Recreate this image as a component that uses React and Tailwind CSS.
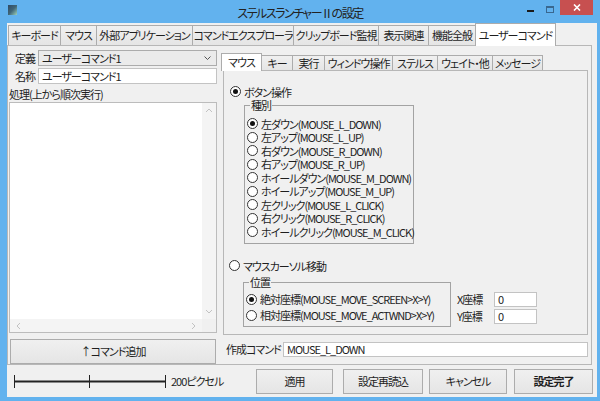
import React from "react";

const outerTabs = [
  { label: "キーボード", w: "w-[52px]" },
  { label: "マウス", w: "w-[36px]" },
  { label: "外部アプリケーション", w: "w-[96px]" },
  { label: "コマンドエクスプローラ", w: "w-[101px]" },
  { label: "クリップボード監視", w: "w-[85px]" },
  { label: "表示関連", w: "w-[50px]" },
  { label: "機能全般", w: "w-[47px]" },
];

const innerTabs = [
  { label: "キー", w: "w-[31px]" },
  { label: "実行", w: "w-[32px]" },
  { label: "ウィンドウ操作", w: "w-[68px]" },
  { label: "ステルス", w: "w-[45px]" },
  { label: "ウェイト・他", w: "w-[55px]" },
  { label: "メッセージ", w: "w-[50px]" },
];

const buttonKinds = [
  "左ダウン(MOUSE_L_DOWN)",
  "左アップ(MOUSE_L_UP)",
  "右ダウン(MOUSE_R_DOWN)",
  "右アップ(MOUSE_R_UP)",
  "ホイールダウン(MOUSE_M_DOWN)",
  "ホイールアップ(MOUSE_M_UP)",
  "左クリック(MOUSE_L_CLICK)",
  "右クリック(MOUSE_R_CLICK)",
  "ホイールクリック(MOUSE_M_CLICK)",
];

function Radio({ checked, label, className = "" }) {
  return (
    <div className={`flex items-center ${className}`}>
      <span className="w-[11px] h-[11px] rounded-full border border-[#333] bg-white flex items-center justify-center shrink-0">
        {checked && <span className="w-[5px] h-[5px] rounded-full bg-[#111]" />}
      </span>
      <span className="block ml-[3px] whitespace-nowrap leading-[12px]">{label}</span>
    </div>
  );
}

function Chevron({ dir }) {
  const pts = {
    up: "1,4 4,1 7,4",
    down: "1,1 4,4 7,1",
    left: "4,1 1,4 4,7",
    right: "1,1 4,4 1,7",
  }[dir];
  const vertical = dir === "up" || dir === "down";
  return (
    <svg width={vertical ? 8 : 5} height={vertical ? 5 : 8}>
      <polyline points={pts} fill="none" stroke="#c2c2c2" strokeWidth="1" />
    </svg>
  );
}

function Button({ children, className = "" }) {
  return (
    <div
      className={`h-[25px] flex items-center justify-center border border-[#acacac] bg-gradient-to-b from-[#f0f0f0] to-[#e5e5e5] whitespace-nowrap ${className}`}
    >
      {children}
    </div>
  );
}

function TitleBar() {
  return (
    <div className="h-[23px] grid grid-cols-[1fr_auto_1fr] items-start">
      <div className="pl-[8px] pt-[5px]">
        <div className="w-[9px] h-[10px] bg-gradient-to-br from-[#2f4a66] via-[#3f6577] to-[#9fd2b8]" />
      </div>
      <div className="pt-[5px] text-[12px] leading-[16px] tracking-[-1.5px] text-[#222] whitespace-nowrap">
        ステルスランチャーⅡの設定
      </div>
      <div className="flex justify-end items-start pr-[7px]">
        <div className="w-[26px] h-[15px] flex items-end justify-center pb-[3px]">
          <div className="w-[7px] h-[2px] bg-[#1a1a1a]" />
        </div>
        <div className="w-[17px] h-[15px] pl-[3px] pt-[6px]">
          <div className="w-[8px] h-[7px] border border-t-2 border-[#39678f]" />
        </div>
        <div className="w-[33px] h-[15px] bg-[#c75050] flex items-center justify-center">
          <svg width="8" height="7">
            <path d="M1 0.5 L7 6.5 M7 0.5 L1 6.5" stroke="#fff" strokeWidth="1.6" />
          </svg>
        </div>
      </div>
    </div>
  );
}

function ListBox() {
  return (
    <div className="h-[231px] w-[208px] border border-[#bcbcbc] bg-white flex flex-col">
      <div className="flex-1 flex">
        <div className="flex-1" />
        <div className="w-[14px] bg-[#f4f4f4] flex flex-col items-center justify-between py-[5px]">
          <Chevron dir="up" />
          <Chevron dir="down" />
        </div>
      </div>
      <div className="h-[13px] flex">
        <div className="flex-1 bg-[#f4f4f4] flex items-center justify-between px-[6px]">
          <Chevron dir="left" />
          <Chevron dir="right" />
        </div>
        <div className="w-[14px] bg-[#f0f0f0]" />
      </div>
    </div>
  );
}

function LeftColumn() {
  return (
    <div className="w-[209px] flex flex-col">
      <div className="mt-[4px] h-[16px] flex items-center">
        <div className="w-[29px] text-right pr-[3px]">定義</div>
        <div className="w-[179px] h-[16px] border border-[#acacac] bg-[#ebebeb] flex items-center justify-between pl-[3px] pr-[5px]">
          <span>ユーザーコマンド1</span>
          <svg width="7" height="4">
            <polyline points="0.5,0.5 3.5,3.5 6.5,0.5" fill="none" stroke="#555" strokeWidth="1" />
          </svg>
        </div>
      </div>
      <div className="mt-[2px] h-[16px] flex items-center">
        <div className="w-[29px] text-right pr-[3px]">名称</div>
        <div className="w-[179px] h-[16px] border border-[#c3c3c3] bg-white flex items-center pl-[3px]">
          ユーザーコマンド1
        </div>
      </div>
      <div className="h-[18px] flex items-end pb-[1px] whitespace-nowrap">処理(上から順次実行)</div>
      <ListBox />
      <Button className="mt-[6px] ml-[1px] w-[206px] h-[18px]">↑コマンド追加</Button>
    </div>
  );
}

function GroupBox({ title, className = "", children }) {
  return (
    <div className={`relative border border-[#a3a3a3] ${className}`}>
      <span className="absolute left-[5px] top-[-6px] bg-[#f0f0f0] px-[1px] leading-[11px]">{title}</span>
      {children}
    </div>
  );
}

function MousePage() {
  return (
    <div className="flex flex-col">
      <Radio checked label="ボタン操作" className="mt-[14px] ml-[6px] h-[13px]" />
      <GroupBox title="種別" className="mt-[7px] ml-[20px] w-[170px] h-[139px] pt-[11px] pl-[2px]">
        {buttonKinds.map((k, i) => (
          <Radio key={k} checked={i === 0} label={k} className="h-[13.5px]" />
        ))}
      </GroupBox>
      <Radio label="マウスカーソル移動" className="mt-[15px] ml-[5px] h-[13px]" />
      <div className="mt-[10px] ml-[19px] flex items-start">
        <GroupBox title="位置" className="w-[208px] h-[45px] pt-[8px] pl-[2px]">
          <Radio checked label="絶対座標(MOUSE_MOVE_SCREEN>X>Y)" className="h-[16px]" />
          <Radio label="相対座標(MOUSE_MOVE_ACTWND>X>Y)" className="h-[16px]" />
        </GroupBox>
        <div className="mt-[10px] ml-[6px] flex flex-col gap-[2px]">
          <div className="flex items-center h-[15px]">
            <span className="w-[37px] whitespace-nowrap">X座標</span>
            <div className="w-[43px] h-[15px] border border-[#c3c3c3] bg-white pl-[3px] flex items-center">0</div>
          </div>
          <div className="flex items-center h-[15px]">
            <span className="w-[37px] whitespace-nowrap">Y座標</span>
            <div className="w-[43px] h-[15px] border border-[#c3c3c3] bg-white pl-[3px] flex items-center">0</div>
          </div>
        </div>
      </div>
    </div>
  );
}

function RightColumn() {
  return (
    <div className="ml-[3px] w-[367px] flex flex-col">
      <div className="mt-[7px] h-[17px] flex items-end relative z-10">
        <div className="w-[41px] h-[18px] -mb-px border-l border-t border-r border-[#acacac] bg-white flex items-center justify-center">
          マウス
        </div>
        {innerTabs.map((t) => (
          <div
            key={t.label}
            className={`${t.w} h-[15px] border-t border-r border-[#acacac] bg-gradient-to-b from-[#f0f0f0] to-[#e5e5e5] flex items-center justify-center whitespace-nowrap`}
          >
            {t.label}
          </div>
        ))}
      </div>
      <div className="ml-[2px] w-[365px] h-[265px] border border-[#b7b7b7] bg-[#f0f0f0]">
        <MousePage />
      </div>
      <div className="mt-[7px] h-[15px] flex items-center">
        <span className="ml-[5px] w-[57px] whitespace-nowrap">作成コマンド</span>
        <div className="flex-1 h-[15px] border border-[#c3c3c3] bg-white flex items-center pl-[3px]">MOUSE_L_DOWN</div>
      </div>
    </div>
  );
}

export default function App() {
  return (
    <div className="w-[600px] h-[401px] bg-[#62b2ee] flex flex-col overflow-hidden text-[11px] leading-[13px] tracking-[-1px] text-[#1e1e1e] font-['Noto_Sans_CJK_JP',sans-serif] [font-feature-settings:'palt']">
      <TitleBar />
      <div className="flex-1 ml-[7px] mr-[3px] mb-[4px] bg-[#f0f0f0] flex flex-col">
        <div className="h-[22px] flex items-end pl-[1px] relative z-10">
          {outerTabs.map((t) => (
            <div
              key={t.label}
              className={`${t.w} h-[20px] border-l border-t border-[#acacac] bg-gradient-to-b from-[#f0f0f0] to-[#e5e5e5] flex items-center justify-center whitespace-nowrap`}
            >
              {t.label}
            </div>
          ))}
          <div className="w-[81px] h-[23px] -mb-px border-l border-t border-r border-[#acacac] bg-white flex items-center justify-center whitespace-nowrap">
            ユーザーコマンド
          </div>
        </div>
        <div className="h-[320px] mr-[5px] border border-[#b7b7b7] bg-[#f0f0f0] flex pl-[1px]">
          <LeftColumn />
          <RightColumn />
        </div>
        <div className="flex-1 flex items-start">
          <svg width="154" height="13" className="ml-[7px] mt-[10px]">
            <line x1="0" y1="6.5" x2="152" y2="6.5" stroke="#222" strokeWidth="2" />
            <line x1="0.5" y1="0" x2="0.5" y2="13" stroke="#222" />
            <line x1="75.5" y1="0" x2="75.5" y2="13" stroke="#222" />
            <line x1="151.5" y1="0" x2="151.5" y2="13" stroke="#222" />
          </svg>
          <span className="ml-[3px] mt-[10px] whitespace-nowrap">200ピクセル</span>
          <div className="ml-auto mr-[4px] mt-[4px] flex">
            <Button className="w-[77px]">適用</Button>
            <Button className="ml-[10px] w-[80px]">設定再読込</Button>
            <Button className="ml-[6px] w-[78px]">キャンセル</Button>
            <Button className="ml-[7px] w-[79px] font-bold">設定完了</Button>
          </div>
        </div>
      </div>
    </div>
  );
}
